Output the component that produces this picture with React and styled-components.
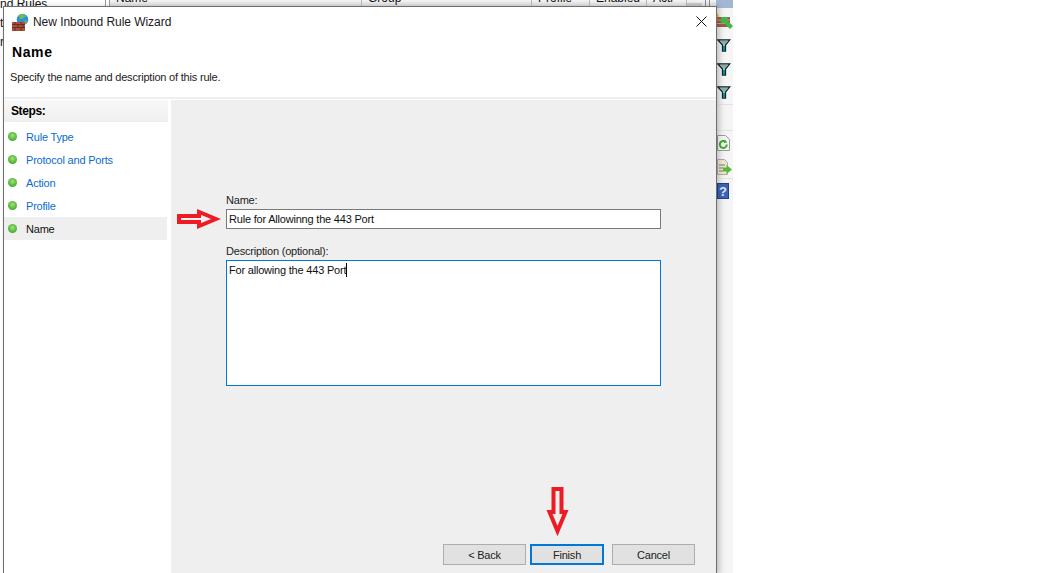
import React from 'react';
import styled, { createGlobalStyle } from 'styled-components';

const GlobalStyle = createGlobalStyle`
  html, body {
    margin: 0;
    padding: 0;
    background: #fff;
    overflow: hidden;
  }
  #root {
    width: 1040px;
    height: 573px;
  }
`;

const Desktop = styled.div`
  position: relative;
  width: 1040px;
  height: 573px;
  overflow: hidden;
  background: #fff;
  font-family: "Liberation Sans", Arial, sans-serif;
`;

/* firewall console that peeks out behind the wizard */
const Console = styled.div`
  width: 733px;
  height: 573px;
  background: #fff;
  display: flex;
`;

const TreePane = styled.div`
  width: 106px;
  flex-shrink: 0;
  border-right: 1px solid #999;
  box-sizing: border-box;
  overflow: hidden;
  font-size: 12px;
  color: #111;
  white-space: nowrap;
`;

const TreeRow = styled.div`
  height: 19px;
  line-height: 14px;
  margin-top: ${p => p.$top || 0}px;
`;

const ListPane = styled.div`
  flex: 1;
  min-width: 0;
  margin-left: 3px;
  border-left: 1px solid #999;
`;

const ConsoleHead = styled.div`
  height: 6px;
  background: linear-gradient(#f4f4f4, #dedede);
  font-size: 12px;
  color: #111;
  overflow: hidden;
  display: flex;
`;

const HeadCell = styled.div`
  width: ${p => p.$w}px;
  flex-shrink: 0;
  border-right: 1px solid #bbb;
  padding-left: ${p => p.$pad || 0}px;
  box-sizing: border-box;
  overflow: hidden;
  white-space: nowrap;
  span {
    display: block;
    margin-top: -8px;
    line-height: 13px;
  }
`;

const ScrollThumb = styled.div`
  width: 15px;
  flex-shrink: 0;
  margin-top: 3px;
  background: #c8c8c8;
`;

const ScrollEdge = styled.div`
  width: 5px;
  margin-left: 3px;
  flex-shrink: 0;
  border-left: 1px solid #888;
  border-right: 1px solid #888;
  box-sizing: border-box;
`;

const ActionPane = styled.div`
  width: 17px;
  flex-shrink: 0;
  background: linear-gradient(90deg, #e6e6e6, #f5f5f5 60%);
  display: flex;
  flex-direction: column;
  box-sizing: border-box;
`;

const ActionTop = styled.div`
  height: 8px;
  background: #a3b7d3;
  margin-bottom: 1px;
`;

const PaneIcon = styled.div`
  height: 24px;
  display: flex;
  align-items: center;
  padding-left: 1px;
  border-bottom: ${p => (p.$rule ? '1px solid #e2e2e2' : 'none')};
  box-sizing: border-box;
`;

const PaneGap = styled.div`
  height: ${p => p.$h}px;
  border-bottom: 1px solid #e2e2e2;
  box-sizing: border-box;
`;

const Wizard = styled.div`
  position: absolute;
  left: 3px;
  top: 6px;
  width: 714px;
  height: 567px;
  box-sizing: border-box;
  background: #fff;
  border: 1px solid #6e6e6e;
  border-bottom: none;
  box-shadow: 2px 0 5px rgba(0, 0, 0, 0.18);
  display: flex;
  flex-direction: column;
  color: #111;
  font-size: 11px;
  letter-spacing: -0.2px;
`;

const TitleBar = styled.div`
  height: 29px;
  display: flex;
  align-items: center;
  padding: 0 9px 0 7px;
  gap: 4px;
  flex-shrink: 0;
`;

const TitleText = styled.div`
  flex: 1;
  font-size: 12px;
  letter-spacing: -0.05px;
  color: #1a1a1a;
`;

const Header = styled.div`
  height: 63px;
  box-sizing: border-box;
  padding-top: 8px;
  padding-left: 8px;
  flex-shrink: 0;
  border-bottom: 2px solid #efefef;
`;

const HeaderTitle = styled.div`
  font-weight: bold;
  font-size: 14px;
  line-height: 16px;
  letter-spacing: 0.6px;
  color: #000;
`;

const HeaderHint = styled.div`
  margin-top: 10px;
  line-height: 14px;
  margin-left: -2px;
  color: #222;
`;

const Main = styled.div`
  flex: 1;
  display: flex;
  min-height: 0;
  margin-top: 1px;
`;

const Steps = styled.div`
  width: 167px;
  box-sizing: border-box;
  flex-shrink: 0;
`;

const StepsTitle = styled.div`
  height: 22px;
  width: 164px;
  line-height: 22px;
  padding-left: 7px;
  box-sizing: border-box;
  font-weight: bold;
  font-size: 12px;
  letter-spacing: -0.4px;
  color: #000;
  background: linear-gradient(#f8f8f8, #efefef);
`;

const StepList = styled.div`
  padding-top: 3px;
  width: 163px;
`;

const Step = styled.div`
  height: 23px;
  display: flex;
  align-items: center;
  padding-left: 4px;
  gap: 9px;
  color: ${p => (p.$active ? '#111' : '#0a6cd0')};
  background: ${p => (p.$active ? '#efefef' : 'transparent')};
`;

const Dot = styled.span`
  width: 9px;
  height: 9px;
  border-radius: 50%;
  background: radial-gradient(circle at 50% 40%, #a4e07e, #45b02e 70%, #4d9a3a);
`;

const Content = styled.div`
  flex: 1;
  background: #efefef;
  display: flex;
  flex-direction: column;
  padding: 93px 0 0 55px;
  box-sizing: border-box;
`;

const Label = styled.label`
  display: block;
  line-height: 14px;
  color: #222;
`;

const FieldBox = styled.div`
  width: 435px;
  box-sizing: border-box;
  height: ${p => p.$h}px;
  margin: 2px 0 ${p => p.$mb || 0}px;
  background: #fff;
  border: 1px solid ${p => (p.$focus ? '#0078d7' : '#7a7a7a')};
  padding: 2px;
  line-height: 14px;
  color: #111;
`;

const Caret = styled.span`
  display: inline-block;
  width: 1px;
  height: 14px;
  background: #000;
  vertical-align: top;
`;

const Footer = styled.div`
  margin-top: auto;
  margin-left: 217px;
  display: flex;
  padding-bottom: 8px;
`;

const Button = styled.div`
  width: ${p => (p.$primary ? 74 : 83)}px;
  margin-right: ${p => p.$gap || 0}px;
  height: 21px;
  box-sizing: border-box;
  display: flex;
  align-items: center;
  justify-content: center;
  color: #222;
  background: #e1e1e1;
  border: ${p => (p.$primary ? '2px solid #0078d7' : '1px solid #adadad')};
`;

const Overlay = styled.svg`
  position: absolute;
  left: ${p => p.$x}px;
  top: ${p => p.$y}px;
`;

const FirewallIcon = () => (
  <svg width="18" height="18" viewBox="0 0 18 18">
    <circle cx="11.500" cy="6.500" r="5.800" fill="#2f8ee0" />
    <path d="M8 2c2-2 5-1 7 1-1 2-3 1-4 3-1 1-3 0-3-4z" fill="#6cc04a" />
    <path d="M14 7l2 1-1 3-2-1z" fill="#6cc04a" />
    <rect x="1" y="9" width="13" height="9" fill="#a8503a" />
    <path d="M1 11.500h13M1 14.500h13M4 9v2.500M10 9v2.500M7 11.500v3M12 11.500v3M4 14.500V18M10 14.500V18" stroke="#5f2a1c" strokeWidth="0.8" />
  </svg>
);

const CloseIcon = () => (
  <svg width="11" height="11" viewBox="0 0 11 11">
    <path d="M0.500 0.500l10 10M10.500 0.500l-10 10" stroke="#111" strokeWidth="1" fill="none" />
  </svg>
);

const FunnelIcon = () => (
  <svg width="14" height="13" viewBox="0 0 14 13">
    <path d="M0.800 0.800h12L8.500 6v6h-3V6z" fill="#b9cccc" stroke="#0b2a2c" strokeWidth="1.300" />
    <path d="M6 7h2v4.500H6z" fill="#0d8a92" />
    <path d="M3 2h8L7.500 5.500h-1z" fill="#8fa8a8" />
  </svg>
);

const RuleIcon = () => (
  <svg width="16" height="17" viewBox="0 0 16 17">
    <path d="M0 4h13v10H0z" fill="#a5573e" />
    <path d="M0 7h13M0 10.500h13" stroke="#d8c4b0" strokeWidth="0.700" />
    <path d="M0 0l2 3-2 2z" fill="#e8b030" />
    <path d="M4 4h8l-2.500 2.500L16 13l-3 3-6.500-6.500L4 12z" fill="#3fb84a" />
  </svg>
);

const RefreshIcon = () => (
  <svg width="13" height="16" viewBox="0 0 13 16">
    <path d="M0.500 0.500h8l4 4v11h-12z" fill="#f4f4f4" stroke="#999" />
    <path d="M9.800 9.500a3.500 3.500 0 1 1-1.200-2.700" fill="none" stroke="#3cae2c" strokeWidth="2" />
    <path d="M7.500 4.500l3 3-3.800.6z" fill="#3cae2c" />
  </svg>
);

const ExportIcon = () => (
  <svg width="15" height="16" viewBox="0 0 15 16">
    <path d="M0.500 0.500h7l3 3v12h-10z" fill="#ece4cc" stroke="#aaa" />
    <path d="M2 6h6M2 9h4M2 12h4" stroke="#777" />
    <path d="M6 8.500h3.500V6L15 10.500 9.500 15v-2.500H6z" fill="#58b83a" />
  </svg>
);

const HelpIcon = () => (
  <svg width="12" height="16" viewBox="0 0 12 16">
    <rect x="0.500" y="0.500" width="11" height="15" fill="#3c62b8" stroke="#24408a" />
    <text x="6" y="13" textAnchor="middle" fontSize="13" fontWeight="bold" fill="#dfe8ff" fontFamily="Liberation Sans">?</text>
  </svg>
);

const steps = ['Rule Type', 'Protocol and Ports', 'Action', 'Profile', 'Name'];

export default function App() {
  return (
    <Desktop>
      <GlobalStyle />
      <Console>
        <TreePane>
          <TreeRow $top={-3}>nd Rules</TreeRow>
          <TreeRow>t</TreeRow>
          <TreeRow>ri</TreeRow>
        </TreePane>
        <ListPane>
          <ConsoleHead>
            <HeadCell $w={252} $pad={6}><span>Name</span></HeadCell>
            <HeadCell $w={170} $pad={6}><span>Group</span></HeadCell>
            <HeadCell $w={58} $pad={6}><span>Profile</span></HeadCell>
            <HeadCell $w={57} $pad={6}><span>Enabled</span></HeadCell>
            <HeadCell $w={40} $pad={6}><span>Acti</span></HeadCell>
            <ScrollThumb />
            <ScrollEdge />
          </ConsoleHead>
        </ListPane>
        <ActionPane>
          <ActionTop />
          <PaneIcon><RuleIcon /></PaneIcon>
          <PaneIcon><FunnelIcon /></PaneIcon>
          <PaneIcon><FunnelIcon /></PaneIcon>
          <PaneIcon $rule><FunnelIcon /></PaneIcon>
          <PaneGap $h={26} />
          <PaneIcon><RefreshIcon /></PaneIcon>
          <PaneIcon $rule><ExportIcon /></PaneIcon>
          <PaneIcon><HelpIcon /></PaneIcon>
        </ActionPane>
      </Console>

      <Wizard>
        <TitleBar>
          <FirewallIcon />
          <TitleText>New Inbound Rule Wizard</TitleText>
          <CloseIcon />
        </TitleBar>
        <Header>
          <HeaderTitle>Name</HeaderTitle>
          <HeaderHint>Specify the name and description of this rule.</HeaderHint>
        </Header>
        <Main>
          <Steps>
            <StepsTitle>Steps:</StepsTitle>
            <StepList>
              {steps.map(s => (
                <Step key={s} $active={s === 'Name'}>
                  <Dot />
                  {s}
                </Step>
              ))}
            </StepList>
          </Steps>
          <Content>
            <Label>Name:</Label>
            <FieldBox $h={20} $mb={15}>Rule for Allowinng the 443 Port</FieldBox>
            <Label>Description (optional):</Label>
            <FieldBox $h={126} $focus>For allowing the 443 Port<Caret /></FieldBox>
            <Footer>
              <Button $gap={4}>&lt; Back</Button>
              <Button $primary $gap={8}>Finish</Button>
              <Button>Cancel</Button>
            </Footer>
          </Content>
        </Main>
      </Wizard>

      <Overlay $x={177} $y={208} width="44" height="22" viewBox="0 0 44 22">
        <path d="M2 8h20V4L39 11 22 18v-4H2z" fill="#efefef" stroke="#ed1c24" strokeWidth="4" />
      </Overlay>
      <Overlay $x={546} $y={486} width="24" height="52" viewBox="0 0 24 52">
        <path d="M7.500 3h8v23h4L11.500 45 3.500 26h4z" fill="#efefef" stroke="#ed1c24" strokeWidth="4" />
      </Overlay>
    </Desktop>
  );
}
